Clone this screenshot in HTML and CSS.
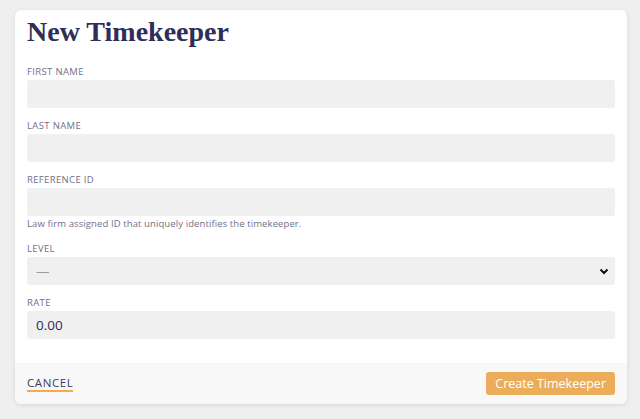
FILE: index.html
```html
<!DOCTYPE html>
<html>
<head>
    <title>New Timekeeper</title>
    <link rel="stylesheet" href="styles.css">
</head>
<body>
    <div class="card">
        <div class="card-body">
            <h1 class="title">New Timekeeper</h1>

            <div class="field">
                <label class="field-label">First Name</label>
                <input class="field-input" type="text">
            </div>

            <div class="field">
                <label class="field-label">Last Name</label>
                <input class="field-input" type="text">
            </div>

            <div class="field">
                <label class="field-label">Reference ID</label>
                <input class="field-input" type="text">
                <div class="field-help">Law firm assigned ID that uniquely identifies the timekeeper.</div>
            </div>

            <div class="field">
                <label class="field-label">Level</label>
                <div class="select-wrap">
                    <select class="field-input field-select">
                        <option>—</option>
                    </select>
                    <svg class="select-arrow" width="10" height="7" viewBox="0 0 10 7">
                        <path d="M1.5 1.5 L5 5 L8.5 1.5" fill="none" stroke="#111" stroke-width="2"/>
                    </svg>
                </div>
            </div>

            <div class="field">
                <label class="field-label">Rate</label>
                <input class="field-input field-rate" type="text" value="0.00">
            </div>
        </div>

        <div class="card-footer">
            <a class="cancel-link" href="#">Cancel</a>
            <button class="primary-btn">Create Timekeeper</button>
        </div>
    </div>
</body>
</html>
```

FILE: styles.css
```css
:root {
    --ink: #2e2e56;
    --muted: #70708a;
    --field-bg: #f0f0f0;
    --accent: #ecad5b;
}

body {
    margin: 0;
    padding: 10px 13px 15px 15px;
    background: #efefef;
    font-family: "Open Sans", Arial, sans-serif;
}

.card {
    background: #ffffff;
    border-radius: 6px;
    box-shadow: 0 1px 4px rgba(0, 0, 0, 0.1);
    overflow: hidden;
}

.card-body {
    padding: 0 12px 24px 12px;
}

.title {
    margin: 0 0 16px 0;
    padding-top: 4px;
    font-family: "Liberation Serif", serif;
    font-weight: bold;
    font-size: 28px;
    line-height: 36px;
    color: var(--ink);
}

.field {
    display: flex;
    flex-direction: column;
    margin-bottom: 12px;
}

.field:last-child {
    margin-bottom: 0;
}

.field-label {
    font-size: 9.5px;
    line-height: 12px;
    text-transform: uppercase;
    color: var(--muted);
    margin-bottom: 2px;
    letter-spacing: 0.35px;
}

.field-input {
    height: 28px;
    box-sizing: border-box;
    border: none;
    border-radius: 3px;
    background: var(--field-bg);
    padding: 0 9px;
    font-family: "Open Sans", Arial, sans-serif;
    font-size: 13.5px;
    color: var(--ink);
    outline: none;
}

.field-help {
    font-size: 9.5px;
    line-height: 12px;
    color: var(--muted);
    margin-top: 2px;
    margin-bottom: 1px;
    letter-spacing: 0.1px;
}

.select-wrap {
    position: relative;
    display: flex;
    flex-direction: column;
}

.field-select {
    appearance: none;
    -webkit-appearance: none;
    color: #9a9aa8;
}

.select-arrow {
    position: absolute;
    right: 6px;
    top: 11px;
}

.card-footer {
    background: #f8f8f8;
    height: 41px;
    padding: 0 12px;
    display: flex;
    justify-content: space-between;
    align-items: center;
}

.cancel-link {
    font-size: 11.5px;
    font-weight: 500;
    text-transform: uppercase;
    color: #3b3b63;
    text-decoration: none;
    border-bottom: 2px solid #f3ab4b;
    line-height: 12px;
    padding-bottom: 1px;
    margin-top: 2px;
    letter-spacing: 0.6px;
}

.primary-btn {
    background: var(--accent);
    color: #ffffff;
    border: none;
    border-radius: 3px;
    height: 23px;
    padding: 0 9px;
    font-family: "Open Sans", Arial, sans-serif;
    font-size: 12.5px;
    cursor: pointer;
}
```
